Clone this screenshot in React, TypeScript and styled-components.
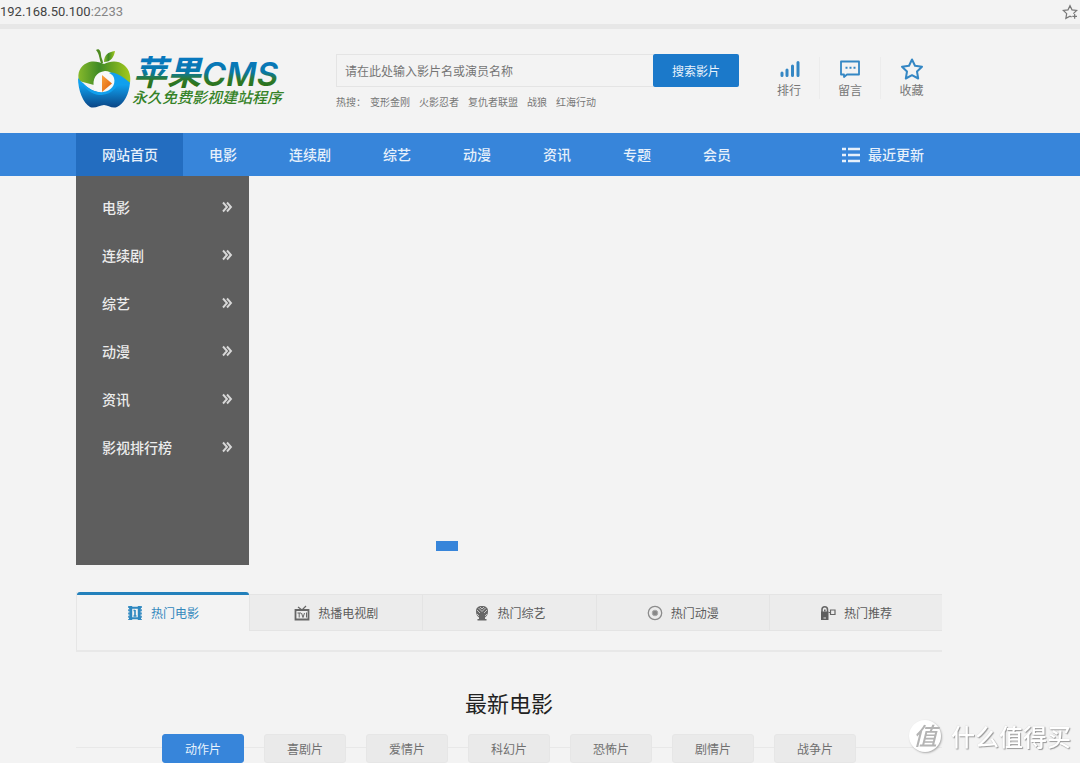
import React from 'react';
import styled, { createGlobalStyle } from 'styled-components';

const blue = '#3785da';
const deepBlue = '#1b79ca';
const line = '#e4e4e4';

const GlobalStyle = createGlobalStyle`
  * { box-sizing: border-box; }
  body {
    margin: 0;
    background: #f3f3f3;
    color: #555;
    font-family: "Noto Sans CJK SC", sans-serif;
    font-size: 12px;
  }
  a { color: inherit; text-decoration: none; }
  button, input { font: inherit; }
  ul { margin: 0; padding: 0; list-style: none; }
  svg { display: block; flex: none; }
`;

const Page = styled.div`
  overflow: hidden;
`;

const Container = styled.div`
  margin: 0 138px 0 76px;
`;

const AddressBar = styled.div`
  display: flex;
  align-items: center;
  justify-content: space-between;
  height: 29px;
  padding-right: 2px;
  border-bottom: 5px solid #e7e7e7;
  color: #444;
  font: 13px/24px Roboto, sans-serif;
`;

const Address = styled.span``;

const Port = styled.span`
  color: #858585;
`;

const Header = styled(Container)`
  display: flex;
  align-items: flex-start;
  height: 104px;
`;

const LogoLink = styled.a`
  width: 260px;
  padding-top: 18px;
`;

const SearchArea = styled.div`
  flex: 1;
  padding-top: 25px;
`;

const SearchForm = styled.form`
  display: flex;
  height: 33px;
`;

const SearchInput = styled.input`
  flex: 1;
  min-width: 0;
  padding: 0 8px;
  border: 1px solid ${line};
  border-right: 0;
  background: transparent;
  outline: none;
  color: #666;
  &::placeholder { color: #757575; opacity: 1; }
`;

const SearchButton = styled.button`
  width: 86px;
  border: 0;
  border-radius: 2px;
  background: ${deepBlue};
  color: #e9f3fc;
`;

const HotWords = styled.div`
  display: flex;
  gap: 9px;
  margin-top: 7px;
  color: #777;
  font-size: 10px;
  line-height: 16px;
`;

const HotLabel = styled.span`
  width: 25px;
  white-space: nowrap;
`;

const Shortcuts = styled.nav`
  display: flex;
  margin: 28px 0 0 20px;
`;

const Shortcut = styled.a`
  display: flex;
  flex-direction: column;
  align-items: center;
  width: 61px;
  color: #777;
  line-height: 18px;
  &:not(:last-child) { border-right: 1px solid #ececec; }
`;

const NavBar = styled.nav`
  background: ${blue};
`;

const NavRow = styled(Container)`
  display: flex;
  height: 43px;
`;

const NavLink = styled.a<{ $active?: boolean }>`
  padding: ${p => (p.$active ? '0 25px 0 26px' : '0 26px')};
  background: ${p => (p.$active ? '#236dc0' : 'transparent')};
  color: #e6f0fb;
  font-size: 14px;
  font-weight: 500;
  line-height: 43px;
`;

const RecentLink = styled(NavLink)`
  display: flex;
  align-items: center;
  gap: 8px;
  margin-left: auto;
  padding: 0 18px 0 0;
`;

const Hero = styled(Container)`
  display: flex;
  min-height: 389px;
`;

const SideMenu = styled.ul`
  width: 173px;
  padding-top: 8px;
  background: #5e5e5e;
`;

const SideLink = styled.a`
  display: flex;
  align-items: center;
  justify-content: space-between;
  height: 48px;
  padding: 0 16px 2px 26px;
  color: #ececec;
  font-size: 14px;
  font-weight: 500;
`;

const Slides = styled.div`
  display: flex;
  flex: 1;
  align-items: flex-end;
  padding: 0 0 14px 187px;
`;

const SlideDot = styled.button`
  width: 22px;
  height: 10px;
  padding: 0;
  border: 0;
  background: ${blue};
`;

const TabPanel = styled(Container)`
  margin-top: 27px;
  height: 60px;
  border-bottom: 2px solid #e8e8e8;
  border-left: 1px solid #e6e6e6;
`;

const TabRow = styled.div`
  display: flex;
  align-items: flex-start;
`;

const Tab = styled.button<{ $active?: boolean }>`
  display: flex;
  flex: 1;
  align-items: center;
  justify-content: center;
  gap: 8px;
  height: 37px;
  margin-top: 2px;
  padding: 0;
  border: solid ${line};
  border-width: 1px 0 1px 1px;
  background: #ececec;
  color: #5c5c5c;
  ${p => p.$active && `
    height: 38px;
    margin-top: 0;
    border: 0;
    border-top: 3px solid #2280bb;
    border-radius: 3px 3px 0 0;
    background: transparent;
    color: #3388bd;
  `}
`;

const Section = styled(Container)`
  padding-top: 33px;
`;

const SectionTitle = styled.h2`
  margin: 0;
  color: #222;
  font-size: 22px;
  font-weight: 400;
  line-height: 34px;
  text-align: center;
`;

const GenreRow = styled.div`
  display: flex;
  justify-content: center;
  gap: 20px;
  margin-top: 15px;
  background: linear-gradient(#e8e8e8, #e8e8e8) 0 13px / 100% 1px no-repeat;
`;

const Genre = styled.button<{ $active?: boolean }>`
  width: 82px;
  height: 29px;
  padding: 0;
  border: 1px solid ${p => (p.$active ? blue : '#e6e6e6')};
  border-radius: 3px;
  background: ${p => (p.$active ? blue : '#eaeaea')};
  color: ${p => (p.$active ? '#e9f3fc' : '#707070')};
`;

const Watermark = styled.div`
  position: fixed;
  right: 9px;
  bottom: 11px;
  display: flex;
  align-items: center;
  gap: 10px;
  color: #fff;
  font-size: 24px;
  font-weight: 500;
  line-height: 30px;
  text-shadow: 1px 1px 1px #999, 0 0 1px #bbb;
`;

const Seal = styled.span`
  width: 32px;
  height: 32px;
  border-radius: 50%;
  background: #fff;
  box-shadow: 1px 1px 2px #aaa;
  color: #b4b4b4;
  font-style: italic;
  text-align: center;
  text-shadow: none;
`;

const Logo = () => (
  <svg width="210" height="64" viewBox="0 0 210 64" role="img" aria-label="苹果CMS">
    <defs>
      <linearGradient id="leaf" x1="0" x2="1">
        <stop offset="0" stopColor="#86b92b" />
        <stop offset=".4" stopColor="#3f8a25" />
        <stop offset="1" stopColor="#a3c91c" />
      </linearGradient>
      <linearGradient id="water" x1="0" y1="0" x2="0" y2="1">
        <stop offset=".3" stopColor="#10a0ee" />
        <stop offset="1" stopColor="#0b4585" />
      </linearGradient>
      <linearGradient id="play" x1="0" y1="0" x2="1" y2="1">
        <stop offset="0" stopColor="#f9a23b" />
        <stop offset="1" stopColor="#dd5c08" />
      </linearGradient>
      <linearGradient id="brand" gradientUnits="userSpaceOnUse" x1="0" y1="14" x2="0" y2="42">
        <stop offset="0" stopColor="#0878bd" />
        <stop offset=".4" stopColor="#0878a8" />
        <stop offset=".65" stopColor="#2c7a30" />
        <stop offset="1" stopColor="#2c6e12" />
      </linearGradient>
    </defs>
    <path d="M20 3C23 1 25 4 25 8C25 11 27 13 27 16H25C23 12 24 8 20 3Z" fill="#4e8a20" />
    <path d="M28 15C28 8 32 5 39 4C38 10 35 15 28 15Z" fill="url(#leaf)" />
    <path d="M3 34C1 26 4 19 11 16C17 13 23 15 28 17C34 14 42 13 48 18C54 23 55 30 54 36L45 33L18 38Z" fill="url(#leaf)" />
    <path d="M2 31C9 39 16 45 25 45C36 45 42 38 37 28C43 29 50 32 54 36C53 47 48 57 41 60C36 62 32 58 28 58C24 58 19 62 14 60C7 56 2 43 2 31Z" fill="url(#water)" />
    <path d="M18 41C16 32 20 25 29 24C36 24 40 29 39 36C38 43 30 48 23 45C20 44 18.500 43 18 41Z" fill="#f7f8f7" />
    <path d="M6 35C13 43 20 46 27 45C35 44 40 38 38 31C37 28 35 27 33 26C39 24 47 30 54 36C48 36 44 36 41 39C36 46 30 48 23 48C15 47 9 42 6 35Z" fill="#10a0ee" />
    <path d="M26 28L36 36.500L26 45Z" fill="url(#play)" />
    <g fill="url(#brand)" fontStyle="italic">
      <text x="57" y="38" fontFamily="Noto Sans CJK SC, sans-serif" fontSize="34" fontWeight="700">苹果</text>
      <text x="126" y="39" fontFamily="Inter, sans-serif" fontSize="33" fontWeight="600">CMS</text>
    </g>
    <text x="56" y="56" fill="#358227" fontFamily="Noto Sans CJK SC, sans-serif" fontSize="15" fontWeight="500" fontStyle="italic">永久免费影视建站程序</text>
  </svg>
);

const STAR = 'M12 2.500L15 8.800L22 9.700L17 14.500L18.200 21.500L12 18.200L5.800 21.500L7 14.500L2 9.700L9 8.800Z';

const FavouriteIcon = () => (
  <svg width="16" height="16" viewBox="0 0 24 24" fill="none" stroke="#777" strokeWidth="1.800">
    <path d="M17 14.500L22 9.700L15 8.800L12 2.500L9 8.800L2 9.700L7 14.500L5.800 21.500L12 18.200L14.500 19.500" />
    <path d="M19 15V22M15.500 18.500H22.500" />
  </svg>
);

const RankIcon = () => (
  <svg width="24" height="24" viewBox="0 0 24 24" stroke="#3487c4" strokeWidth="3" strokeLinecap="round">
    <path d="M5 16V18.500M10 13V18.500M15.500 9V18.500M21 5.500V18.500" />
  </svg>
);

const MessageIcon = () => (
  <svg width="24" height="24" viewBox="0 0 24 24" fill="none" stroke="#3487c4" strokeWidth="1.800">
    <path d="M3 4.500H21V17.500H9L6 20V17.500H3Z" strokeLinejoin="round" />
    <path d="M7.500 10.800H9.500M11.500 10.800H13.500M15.500 10.800H17.500" strokeWidth="2" />
  </svg>
);

const StarIcon = () => (
  <svg width="24" height="24" viewBox="0 0 24 24" fill="none" stroke="#3487c4" strokeWidth="2" strokeLinejoin="round">
    <path d={STAR} />
  </svg>
);

const ListIcon = () => (
  <svg width="18" height="16" viewBox="0 0 18 16" stroke="#e6f0fb" strokeWidth="2.400">
    <path d="M0 2H4M6 2H18M0 8H4M6 8H18M0 14H4M6 14H18" />
  </svg>
);

const Chevrons = () => (
  <svg width="12" height="12" viewBox="0 0 12 12" fill="none" stroke="#d8d8d8" strokeWidth="1.900">
    <path d="M2 1.500L6 6L2 10.500M6 1.500L10 6L6 10.500" />
  </svg>
);

const FilmIcon = () => (
  <svg width="16" height="16" viewBox="0 0 16 16" fill="none" stroke="#2f88c0">
    <path d="M3.800 1V15M12.200 1V15" strokeWidth="2.800" />
    <path d="M2 2.800H14M2 13.200H14" strokeWidth="2" />
    <path d="M2 1V15M14 1V15" strokeWidth="1.600" strokeDasharray="2 1.250" />
    <path d="M8 5V11M6.500 5.500H8M6.500 11H9.500" strokeWidth="1.600" />
  </svg>
);

const TvIcon = () => (
  <svg width="16" height="16" viewBox="0 0 16 16" fill="none" stroke="#666">
    <path d="M1.500 5H14.500V14.500H1.500Z" strokeWidth="1.800" />
    <path d="M4 2L8 5L12 1" strokeWidth="1.200" />
    <path d="M3.500 8H7M5.200 8V12.500M7.500 8L9 12.500L10.500 8M12.500 7.500V12.500" />
  </svg>
);

const MicIcon = () => (
  <svg width="16" height="16" viewBox="0 0 16 16">
    <path d="M8 1C12 1 14 3 14 6C14 9.500 13 11 11 12.500V14H12.500V15.500H3.500V14H5V12.500C3 11 2 9.500 2 6C2 3 4 1 8 1Z" fill="#666" />
    <path d="M4.500 3L8 6.500L11.500 3M6 2L8 4L10 2M3 5L6 8M13 5L10 8M3 9L5 11M13 9L11 11" fill="none" stroke="#cfcfcf" strokeWidth=".9" />
  </svg>
);

const DiscIcon = () => (
  <svg width="16" height="16" viewBox="0 0 16 16" fill="none" stroke="#8c8c8c">
    <circle cx="8" cy="8" r="6.700" strokeWidth="1.300" />
    <circle cx="8" cy="8" r="2.800" fill="#888" stroke="#aaa" />
  </svg>
);

const CameraIcon = () => (
  <svg width="16" height="16" viewBox="0 0 16 16" fill="none" stroke="#666">
    <path d="M2 7V4.500C2 .8 7.500 .8 7.500 4.500V7" strokeWidth="1.600" />
    <path d="M1 6.500H8.500V15H1Z" fill="#5d5d5d" stroke="none" />
    <path d="M4.800 4.500V6.500" strokeWidth="1.600" />
    <path d="M3.500 13H6" stroke="#ddd" />
    <path d="M8.500 7.500H10.500M10.500 5H15V9.500H10.500Z" strokeWidth="1.200" />
  </svg>
);

const hotWords = ['变形金刚', '火影忍者', '复仇者联盟', '战狼', '红海行动'];
const navItems = ['网站首页', '电影', '连续剧', '综艺', '动漫', '资讯', '专题', '会员'];
const sideItems = ['电影', '连续剧', '综艺', '动漫', '资讯', '影视排行榜'];
const genres = ['动作片', '喜剧片', '爱情片', '科幻片', '恐怖片', '剧情片', '战争片'];
const shortcuts = [
  { label: '排行', Icon: RankIcon },
  { label: '留言', Icon: MessageIcon },
  { label: '收藏', Icon: StarIcon },
];
const tabs = [
  { label: '热门电影', Icon: FilmIcon },
  { label: '热播电视剧', Icon: TvIcon },
  { label: '热门综艺', Icon: MicIcon },
  { label: '热门动漫', Icon: DiscIcon },
  { label: '热门推荐', Icon: CameraIcon },
];

export default function App() {
  return (
    <Page>
      <GlobalStyle />
      <AddressBar>
        <Address>192.168.50.100<Port>:2233</Port></Address>
        <FavouriteIcon />
      </AddressBar>

      <Header as="header">
        <LogoLink href="#"><Logo /></LogoLink>
        <SearchArea>
          <SearchForm onSubmit={e => e.preventDefault()}>
            <SearchInput aria-label="搜索影片" placeholder="请在此处输入影片名或演员名称" />
            <SearchButton type="submit">搜索影片</SearchButton>
          </SearchForm>
          <HotWords>
            <HotLabel>热搜：</HotLabel>
            {hotWords.map(w => <a href="#" key={w}>{w}</a>)}
          </HotWords>
        </SearchArea>
        <Shortcuts>
          {shortcuts.map(({ label, Icon }) => (
            <Shortcut href="#" key={label}><Icon />{label}</Shortcut>
          ))}
        </Shortcuts>
      </Header>

      <NavBar>
        <NavRow>
          {navItems.map((item, i) => (
            <NavLink href="#" key={item} $active={i === 0}>{item}</NavLink>
          ))}
          <RecentLink href="#"><ListIcon />最近更新</RecentLink>
        </NavRow>
      </NavBar>

      <Hero>
        <SideMenu>
          {sideItems.map(item => (
            <li key={item}><SideLink href="#">{item}<Chevrons /></SideLink></li>
          ))}
        </SideMenu>
        <Slides><SlideDot type="button" aria-label="1" /></Slides>
      </Hero>

      <TabPanel>
        <TabRow role="tablist">
          {tabs.map(({ label, Icon }, i) => (
            <Tab type="button" role="tab" aria-selected={i === 0} key={label} $active={i === 0}>
              <Icon />{label}
            </Tab>
          ))}
        </TabRow>
      </TabPanel>

      <Section as="section">
        <SectionTitle>最新电影</SectionTitle>
        <GenreRow>
          {genres.map((g, i) => (
            <Genre type="button" key={g} $active={i === 0}>{g}</Genre>
          ))}
        </GenreRow>
      </Section>

      <Watermark><Seal>值</Seal>什么值得买</Watermark>
    </Page>
  );
}
